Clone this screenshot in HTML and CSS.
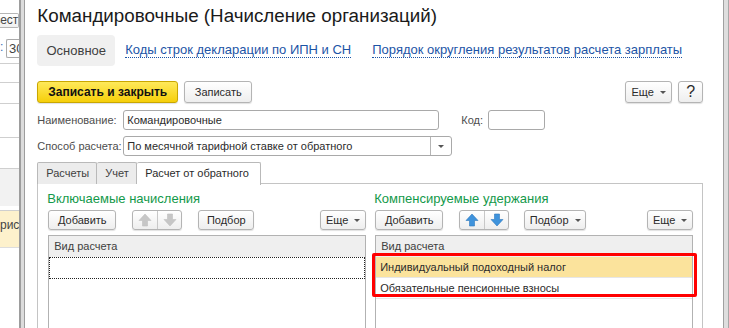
FILE: index.html
```html
<!DOCTYPE html>
<html lang="ru">
  <head>
    <meta charset="UTF-8" />
    <title>Командировочные (Начисление организаций)</title>
    <link rel="stylesheet" href="styles.css">
  </head>
  <body>
    <div class="screen">
      <!-- окно за формой, видна только полоска -->
      <aside class="behind">
        <div class="b-top"></div>
        <div class="b-btn">вест</div>
        <div class="b-field"><span class="b-colon">:</span><span class="b-input">30</span></div>
        <div class="b-row h18"></div>
        <div class="b-row h20"></div>
        <div class="b-row h34"></div>
        <div class="b-row h31"></div>
        <div class="b-row gray"></div>
        <div class="b-row yellow">рис</div>
      </aside>
      <div class="sep"></div>

      <div class="window">
        <h1>Командировочные (Начисление организаций)</h1>
        <nav class="nav">
          <span class="nav-item">Основное</span>
          <a class="nav-link">Коды строк декларации по ИПН и СН</a>
          <a class="nav-link">Порядок округления результатов расчета зарплаты</a>
        </nav>

        <div class="toolbar">
          <button class="btn primary">Записать и закрыть</button>
          <button class="btn">Записать</button>
          <span class="spacer"></span>
          <button class="btn more">Еще <i class="caret"></i></button>
          <button class="btn help">?</button>
        </div>

        <div class="field-row">
          <label>Наименование:</label>
          <div class="input name">Командировочные</div>
          <label class="code-label">Код:</label>
          <div class="input code"></div>
        </div>
        <div class="field-row">
          <label>Способ расчета:</label>
          <div class="select">
            <span class="select-text">По месячной тарифной ставке от обратного</span>
            <span class="select-btn"><i class="caret"></i></span>
          </div>
        </div>

        <div class="tabs">
          <span class="tab">Расчеты</span>
          <span class="tab">Учет</span>
          <span class="tab active">Расчет от обратного</span>
        </div>

        <div class="panel">
          <section class="group">
            <h2>Включаемые начисления</h2>
            <div class="group-bar">
              <button class="btn add">Добавить</button>
              <div class="arrows disabled">
                <span class="arrow"><svg width="14" height="14" viewBox="0 0 14 14"><path d="M7 1 L13 7.5 H9.5 V13 H4.5 V7.5 H1 Z" /></svg></span>
                <span class="arrow"><svg width="14" height="14" viewBox="0 0 14 14"><path d="M7 13 L13 6.5 H9.5 V1 H4.5 V6.5 H1 Z" /></svg></span>
              </div>
              <button class="btn pick">Подбор</button>
              <span class="spacer"></span>
              <button class="btn more">Еще <i class="caret"></i></button>
            </div>
            <div class="table">
              <div class="thead">Вид расчета</div>
              <div class="row focus"></div>
            </div>
          </section>

          <section class="group">
            <h2>Компенсируемые удержания</h2>
            <div class="group-bar">
              <button class="btn add">Добавить</button>
              <div class="arrows">
                <span class="arrow"><svg width="14" height="14" viewBox="0 0 14 14"><path d="M7 1 L13 7.5 H9.5 V13 H4.5 V7.5 H1 Z" /></svg></span>
                <span class="arrow"><svg width="14" height="14" viewBox="0 0 14 14"><path d="M7 13 L13 6.5 H9.5 V1 H4.5 V6.5 H1 Z" /></svg></span>
              </div>
              <button class="btn pick">Подбор <i class="caret"></i></button>
              <span class="spacer"></span>
              <button class="btn more">Еще <i class="caret"></i></button>
            </div>
            <div class="table">
              <div class="thead">Вид расчета</div>
              <div class="row selected">Индивидуальный подоходный налог</div>
              <div class="row">Обязательные пенсионные взносы</div>
              <div class="mark"></div>
            </div>
          </section>
        </div>
      </div>
      <div class="rightbar"></div>
    </div>
  </body>
</html>
```

FILE: styles.css
```css
* {
  box-sizing: border-box;
  margin: 0;
  padding: 0;
}
body {
  font-family: "Liberation Sans", Arial, sans-serif;
  font-size: 11px;
  color: #2b2b2b;
  background: #fff;
  overflow: hidden;
  white-space: nowrap;
}
.screen {
  display: flex;
  height: 328px;
}

/* окно позади */
.behind {
  width: 20px;
  display: flex;
  flex-direction: column;
  overflow: hidden;
  color: #444;
  font-size: 12px;
}
.b-top {
  height: 13px;
}
.b-btn {
  height: 15px;
  border: 1px solid #b5b5b5;
  border-left: none;
  border-radius: 0 2px 2px 0;
  line-height: 13px;
  text-align: right;
  direction: rtl;
  background: linear-gradient(#fff, #f0f0f0);
}
.b-field {
  height: 35px;
  display: flex;
  align-items: flex-start;
  padding-top: 11px;
}
.b-colon {
  color: #3a6bb3;
  width: 6px;
  line-height: 17px;
}
.b-input {
  flex: 1;
  height: 19px;
  border: 1px solid #aaa;
  border-right: none;
  border-radius: 2px 0 0 2px;
  padding-left: 2px;
  line-height: 17px;
  font-size: 13px;
  overflow: hidden;
}
.b-row {
  border-top: 1px solid #cfcfcf;
}
.h18 { height: 19px; }
.h20 { height: 21px; }
.h34 { height: 34px; }
.h31 { height: 31px; }
.b-row.gray {
  height: 38px;
  background: #f2f2f2;
}
.b-row.yellow {
  height: 38px;
  margin-top: 4px;
  background: #fdf1cc;
  border-bottom: 1px solid #ddd;
  line-height: 24px;
  direction: rtl;
  padding-top: 2px;
}
.sep {
  width: 6px;
  border-left: 2px solid #9d9d9d;
  border-right: 1px solid #9d9d9d;
  background: #dcdcdc;
}
.rightbar {
  width: 6px;
  border-left: 1px solid #a0a0a0;
  border-right: 1px solid #a8a8a8;
  background: #dedede;
}

/* форма */
.window {
  flex: 1;
  padding: 3px 20px 0 12px;
  display: flex;
  flex-direction: column;
}
h1 {
  font-weight: normal;
  font-size: 18.8px;
  color: #1a1a1a;
  line-height: 26px;
}
.nav {
  display: flex;
  align-items: center;
  margin-top: 6px;
  height: 31px;
  font-size: 13px;
}
.nav-item {
  background: #f0f0f0;
  border-radius: 4px;
  height: 31px;
  line-height: 31px;
  width: 78px;
  text-align: center;
  color: #404040;
  margin-right: 10px;
}
.nav-link {
  color: #1c54a6;
  border-bottom: 1px dotted #1c54a6;
  line-height: 14px;
  margin-right: 21px;
  cursor: pointer;
}

.btn {
  font-family: inherit;
  font-size: 11px;
  color: #2b2b2b;
  height: 21px;
  padding: 0 8px;
  border: 1px solid #b4b4b4;
  border-radius: 3px;
  background: linear-gradient(#fff, #eeeeee);
  box-shadow: 0 1px 1px rgba(0, 0, 0, 0.12);
  display: inline-flex;
  align-items: center;
  justify-content: center;
}
.btn.primary {
  background: linear-gradient(#ffe95a, #f6cf0a);
  border-color: #c9a700;
  font-weight: bold;
  font-size: 12px;
  color: #111;
  width: 141px;
}
.caret {
  display: inline-block;
  margin-left: 6px;
  border-left: 3px solid transparent;
  border-right: 3px solid transparent;
  border-top: 3px solid #555;
}
.spacer {
  flex: 1;
}

.toolbar {
  display: flex;
  gap: 6px;
  margin-top: 15px;
  height: 22px;
}
.toolbar .btn {
  height: 22px;
}
.toolbar .btn:nth-child(2) {
  width: 68px;
}
.toolbar .more {
  width: 47px;
}
.btn.help {
  width: 25px;
  font-size: 16px;
  padding: 0;
}

.field-row {
  display: flex;
  align-items: center;
  height: 20px;
  margin-top: 6px;
}
.toolbar + .field-row {
  margin-top: 7px;
}
.field-row label {
  width: 86px;
  color: #4d4d4d;
}
.input {
  height: 20px;
  border: 1px solid #a9a9a9;
  border-radius: 3px;
  padding-left: 3px;
  line-height: 18px;
}
.input.name {
  width: 316px;
}
.field-row .code-label {
  width: auto;
  margin-left: 22px;
  margin-right: 5px;
}
.input.code {
  width: 57px;
}
.select {
  width: 329px;
  height: 20px;
  border: 1px solid #a9a9a9;
  border-radius: 3px;
  display: flex;
}
.select-text {
  flex: 1;
  padding-left: 3px;
  line-height: 18px;
}
.select-btn {
  width: 21px;
  border-left: 1px solid #b5b5b5;
  display: flex;
  align-items: center;
  justify-content: center;
}
.select-btn .caret {
  margin-left: 0;
}

.tabs {
  display: flex;
  margin-top: 6px;
  height: 22px;
  position: relative;
  z-index: 1;
}
.tab {
  height: 22px;
  line-height: 21px;
  border: 1px solid #b9b9b9;
  border-bottom: none;
  background: #ececec;
  padding: 0 8px;
  color: #404040;
  border-radius: 2px 2px 0 0;
}
.tab + .tab {
  border-left: none;
}
.tab:nth-child(1) { width: 60px; }
.tab:nth-child(2) { width: 40px; }
.tab.active {
  background: #fff;
  width: 124px;
  height: 23px;
  color: #2b2b2b;
}

.panel {
  flex: 1;
  border: 1px solid #c4c4c4;
  border-bottom: none;
  margin-top: -1px;
  display: flex;
  gap: 9px;
  padding: 0 9px 0 10px;
}
.group {
  flex: 1;
  display: flex;
  flex-direction: column;
}
h2 {
  font-weight: normal;
  font-size: 13px;
  color: #13994a;
  line-height: 16px;
  margin-top: 7px;
  margin-left: -1px;
}
.group-bar {
  display: flex;
  margin-top: 3px;
  height: 21px;
}
.group-bar .btn {
  height: 20px;
}
.group-bar .add {
  width: 68px;
  margin-right: 16px;
}
.arrows {
  display: flex;
  height: 20px;
  border: 1px solid #b4b4b4;
  border-radius: 3px;
  background: linear-gradient(#fff, #eeeeee);
  box-shadow: 0 1px 1px rgba(0, 0, 0, 0.12);
  margin-right: 16px;
}
.arrow {
  width: 24px;
  display: flex;
  align-items: center;
  justify-content: center;
}
.arrow + .arrow {
  border-left: 1px solid #c8c8c8;
}
.arrow path {
  fill: #3f93dc;
  stroke: #2f78bd;
  stroke-width: 0.6;
}
.arrows.disabled .arrow path {
  fill: #c6c6c6;
  stroke: #c0c0c0;
}
.group-bar .pick {
  width: 56px;
}
.group:nth-child(2) .group-bar .pick {
  margin-left: -1px;
  width: 62px;
}
.group-bar .more {
  width: 46px;
}

.table {
  flex: 1;
  margin-top: 4px;
  border: 1px solid #b2b2b2;
  border-bottom: none;
  position: relative;
}
.thead {
  height: 21px;
  background: #efefef;
  line-height: 21px;
  padding-left: 5px;
  color: #404040;
}
.row {
  height: 21px;
  line-height: 20px;
  padding-left: 4px;
  border-bottom: 1px solid #e6e6e6;
}
.row.focus {
  border: 1px dotted #222;
  height: 22px;
}
.row.selected {
  background: #fbe39c;
}
.mark {
  position: absolute;
  left: -4px;
  right: -5px;
  top: 17px;
  height: 44px;
  border: 3px solid #f00;
  border-radius: 2px;
}
```
